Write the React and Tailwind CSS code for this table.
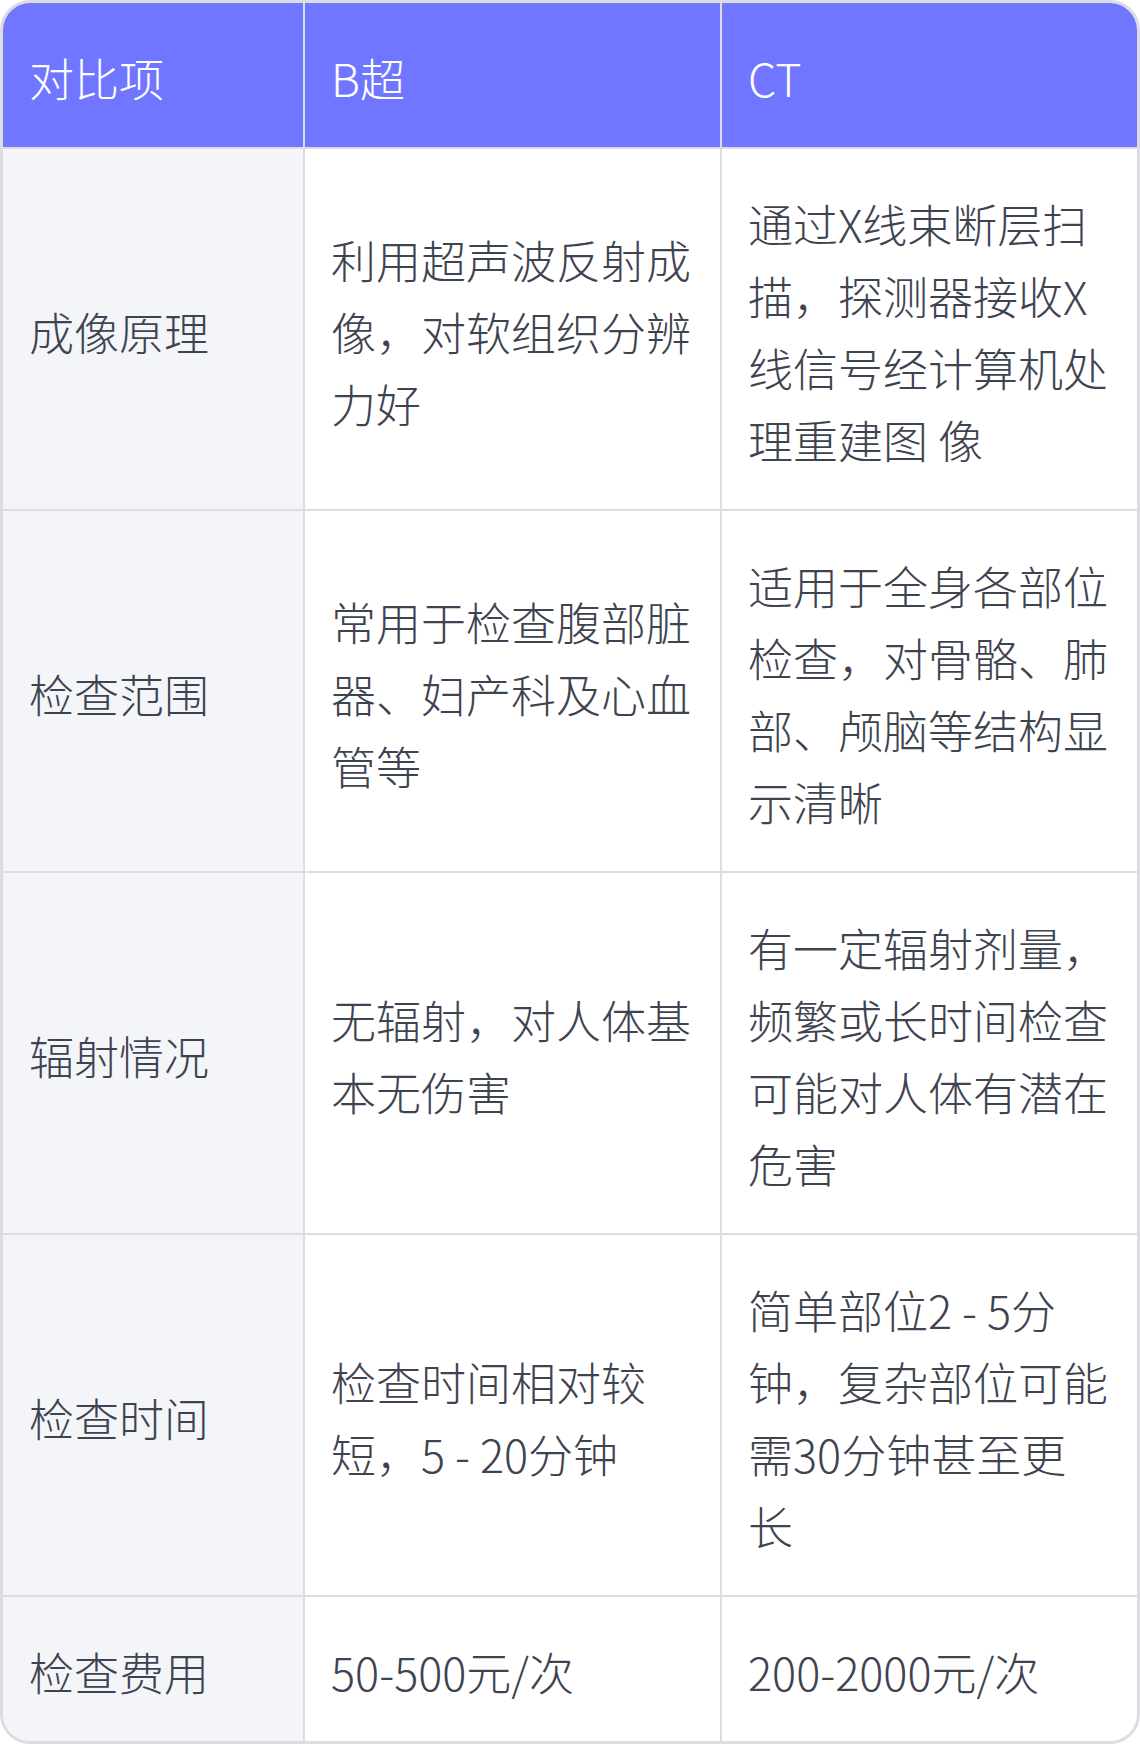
const filas = [
  {
    item: '成像原理',
    bchao: '利用超声波反射成像，对软组织分辨力好',
    ct: '通过X线束断层扫描，探测器接收X线信号经计算机处理重建图 像',
  },
  {
    item: '检查范围',
    bchao: '常用于检查腹部脏器、妇产科及心血管等',
    ct: '适用于全身各部位检查，对骨骼、肺部、颅脑等结构显示清晰',
  },
  {
    item: '辐射情况',
    bchao: '无辐射，对人体基本无伤害',
    ct: '有一定辐射剂量，频繁或长时间检查可能对人体有潜在危害',
  },
  {
    item: '检查时间',
    bchao: '检查时间相对较短，5 - 20分钟',
    ct: '简单部位2 - 5分钟，复杂部位可能需30分钟甚至更长',
  },
  {
    item: '检查费用',
    bchao: '50-500元/次',
    ct: '200-2000元/次',
  },
];

const celda = 'flex items-center pl-[26px] pr-[26px] pt-[39px] pb-[33px]';

export default function App() {
  return (
    <div
      className="w-[1140px] bg-white text-[45px] leading-[72px] font-extralight text-[#3e4350]"
      style={{ fontFamily: '"Noto Sans CJK SC", "Noto Sans", sans-serif' }}
    >
      <div className="border-[3px] border-[#dcdde3] rounded-[30px] overflow-hidden">
        {/* Encabezado */}
        <div className="grid grid-cols-[302px_417px_1fr] bg-[#7076ff] text-white border-b-2 border-[#dcdde3]">
          <div className={`${celda} border-r-2 border-[#dcdde3]`}>对比项</div>
          <div className={`${celda} border-r-2 border-[#dcdde3]`}>B超</div>
          <div className={celda}>CT</div>
        </div>

        {filas.map((fila, idx) => (
          <div
            key={idx}
            className={`grid grid-cols-[302px_417px_1fr] ${
              idx < filas.length - 1 ? 'border-b-2 border-[#dcdde3]' : ''
            }`}
          >
            <div className={`${celda} bg-[#f4f5f9] border-r-2 border-[#dcdde3]`}>{fila.item}</div>
            <div className={`${celda} border-r-2 border-[#dcdde3]`}>{fila.bchao}</div>
            <div className={celda}>{fila.ct}</div>
          </div>
        ))}
      </div>
    </div>
  );
}
